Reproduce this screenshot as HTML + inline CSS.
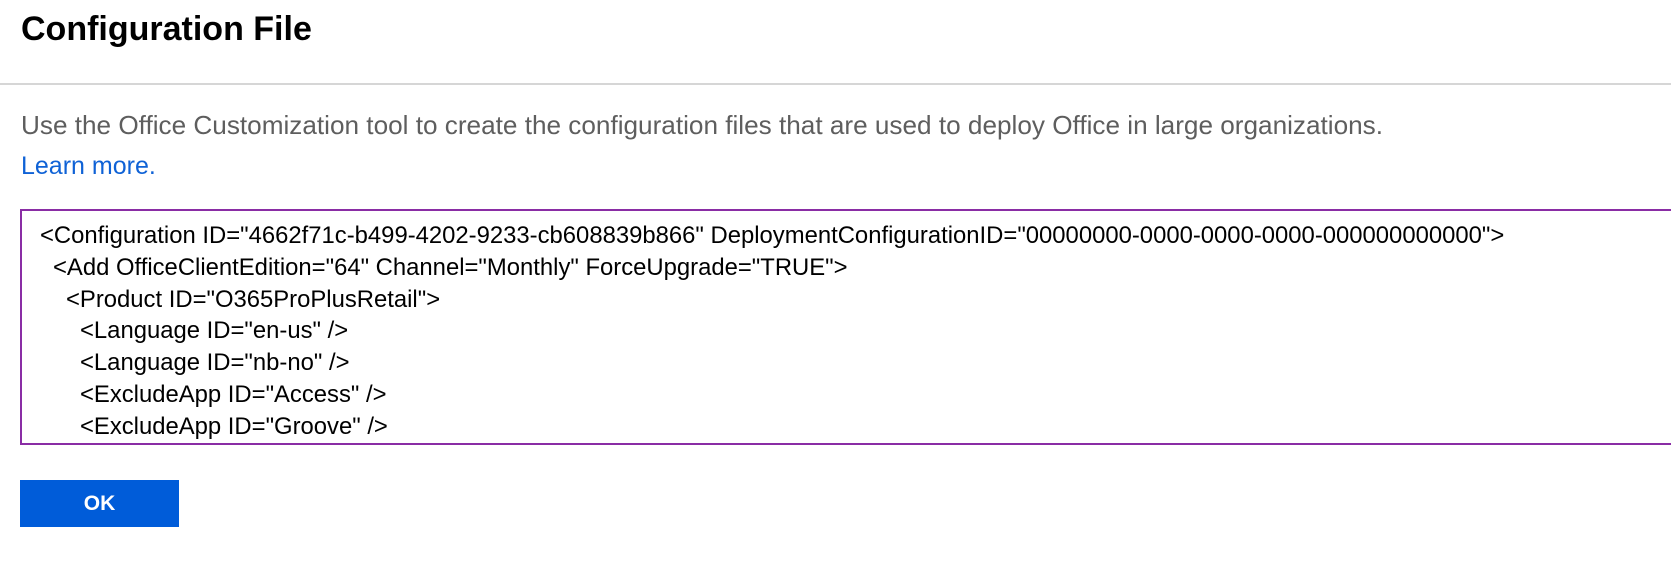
<!DOCTYPE html>
<html><head><meta charset="utf-8"><style>
html,body{margin:0;padding:0;background:#fff;width:1671px;height:566px;overflow:hidden;font-family:"Liberation Sans",Arial,sans-serif;}
.t{position:absolute;left:21px;top:9px;font-size:34px;font-weight:bold;color:#000;line-height:40px;}
.hr{position:absolute;left:0;top:83px;width:1671px;height:2px;background:#d6d6d6;}
.d{position:absolute;left:21px;top:110px;font-size:26.15px;color:#5e5e5e;line-height:30px;white-space:nowrap;}
.l{position:absolute;left:21px;top:151px;font-size:25px;color:#0f62d6;line-height:30px;}
.box{position:absolute;left:20px;top:209px;width:1700px;height:236px;border:2px solid #8a2da5;box-sizing:border-box;}
.code{position:absolute;left:40px;top:220px;font-size:23.85px;line-height:31.8px;color:#000;white-space:pre;}
.code div:nth-child(2){padding-left:13px}
.code div:nth-child(3){padding-left:26px}
.code div.i3{padding-left:40px}
.ok{position:absolute;left:20px;top:480px;width:159px;height:47px;background:#005cd9;color:#fff;font-weight:bold;font-size:21px;text-align:center;line-height:47px;}
</style></head><body>
<div class="t">Configuration File</div>
<div class="hr"></div>
<div class="d">Use the Office Customization tool to create the configuration files that are used to deploy Office in large organizations.</div>
<div class="l">Learn more.</div>
<div class="box"></div>
<div class="code"><div>&lt;Configuration ID="4662f71c-b499-4202-9233-cb608839b866" DeploymentConfigurationID="00000000-0000-0000-0000-000000000000"&gt;</div><div>&lt;Add OfficeClientEdition="64" Channel="Monthly" ForceUpgrade="TRUE"&gt;</div><div>&lt;Product ID="O365ProPlusRetail"&gt;</div><div class="i3">&lt;Language ID="en-us" /&gt;</div><div class="i3">&lt;Language ID="nb-no" /&gt;</div><div class="i3">&lt;ExcludeApp ID="Access" /&gt;</div><div class="i3">&lt;ExcludeApp ID="Groove" /&gt;</div></div>
<div class="ok">OK</div>
</body></html>
